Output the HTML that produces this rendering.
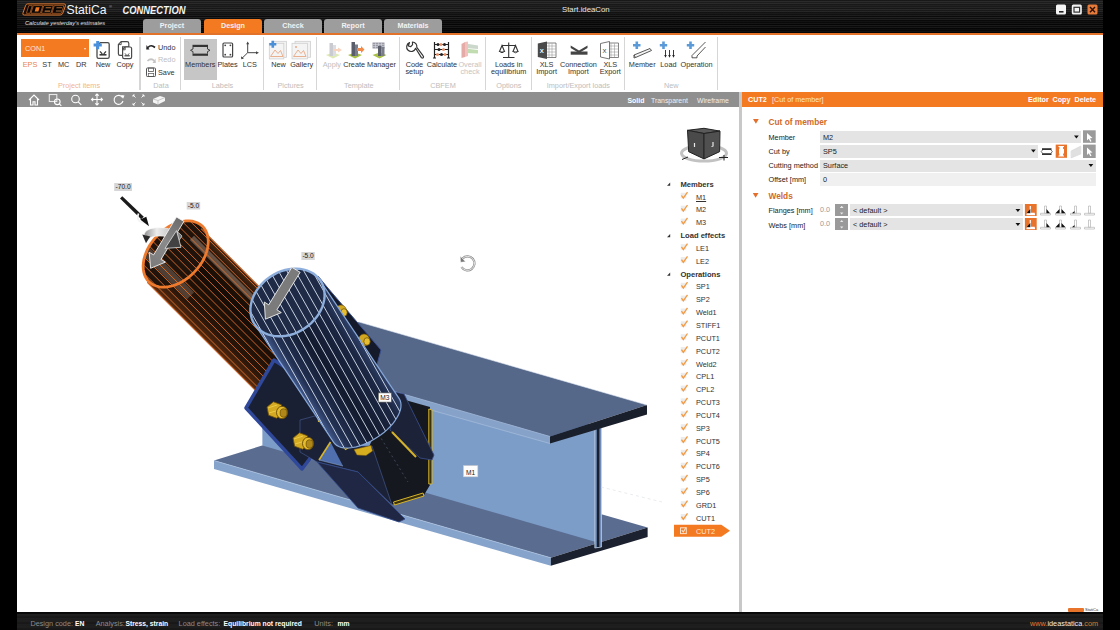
<!DOCTYPE html>
<html><head><meta charset="utf-8">
<style>
*{margin:0;padding:0;box-sizing:border-box}
html,body{width:1120px;height:630px;overflow:hidden;background:#000}
body{position:relative;font-family:"Liberation Sans",sans-serif;font-size:7.2px;color:#333}
.a{position:absolute;white-space:nowrap}
.c{text-align:center;line-height:8px}
.t{line-height:8px}
#title{left:17px;top:0;width:1086px;height:33px;background:linear-gradient(180deg,rgba(60,60,60,0.35) 0px,rgba(60,60,60,0.3) 9px,rgba(40,40,40,0.15) 16px,rgba(0,0,0,0.2) 24px,rgba(0,0,0,0.45) 33px),repeating-linear-gradient(180deg,#060606 0px,#060606 1px,#222 1.5px,#0c0c0c 2.5px,#0c0c0c 3px,#2a2a2a 3.7px,#080808 4.5px,#141414 5.5px,#0a0a0a 6.5px,#262626 7.2px,#070707 8px)}
#obar{left:17px;top:32.5px;width:1086px;height:2.5px;background:#e2722a}
#ribbon{left:17px;top:35px;width:1086px;height:57px;background:#fff}
.tab{top:19px;height:14px;width:58px;border-radius:3px 3px 0 0;background:#9d9d9d;color:#f2f2f2;font-weight:bold;text-align:center;line-height:14px;font-size:7.2px}
.sep{top:37px;width:1.3px;height:53px;background:#d6d6d6}
#vbar{left:17px;top:92px;width:722px;height:15px;background:#8f8f8f}
#split{left:739px;top:92px;width:3px;height:520px;background:#c8c8c8}
#view{left:17px;top:107px;width:722px;height:505px;background:#fff;overflow:hidden}
#panel{left:742px;top:107px;width:361px;height:505px;background:#fff}
#phead{left:742px;top:92px;width:361px;height:15px;background:#f47a22}
#status{left:17px;top:612px;width:1086px;height:18px;background:linear-gradient(180deg,#080808 0,#0a0a0a 1.5px,transparent 2px),repeating-linear-gradient(180deg,#161616 0px,#262626 1px,#141414 2px,#2a2a2a 3px,#121212 4px,#202020 5px,#101010 6px)}
svg.i{position:absolute;overflow:visible}
</style></head><body>
<div class="a" id="title"></div>
<div class="a" id="obar"></div>
<div class="a" id="ribbon"></div>
<div class="a" id="vbar"></div>
<div class="a" id="phead"></div>
<div class="a" id="view"></div>
<div class="a" id="split"></div>
<div class="a" id="panel"></div>
<div class="a" id="status"></div>

<svg class="i" style="left:0;top:0" width="200" height="32" viewBox="0 0 200 32">
<path d="M27.5,3.9 H64 Q66,3.9 65.4,5.8 L62.8,13.2 Q62.2,15 60.2,15 H24.2 Q22.3,15 22.9,13.2 L25.5,5.8 Q26,3.9 27.5,3.9 Z" fill="#1a0c04" stroke="#e07a30" stroke-width="1"/>
<g fill="#050505" stroke="#c86a2a" stroke-width="0.7">
<path d="M28.8,5.6 H32.3 L29.9,13.3 H26.4 Z"/>
<path d="M33.3,5.6 H42.8 L40.4,13.3 H30.9 Z"/>
<path d="M43.8,5.6 H53.3 L50.9,13.3 H41.4 Z"/>
<path d="M54.3,5.6 H63.8 L61.4,13.3 H51.9 Z"/>
</g>
<path d="M35.9,7.3 H39.6 L38.4,11.6 H34.7 Z" fill="#f07a22"/>
<path d="M45.8,7.2 H51.3 L51,8.3 H45.5 Z M44.8,10.6 H50.3 L50,11.7 H44.5 Z" fill="#b87038"/>
<path d="M56,10.5 H61.5 L61.2,11.6 H55.7 Z M56.6,7.2 H62.1 L61.8,8.3 H56.3 Z" fill="#a86a3a"/>
<text x="66.5" y="14.2" font-family="Liberation Sans" font-size="12.2" fill="#f4f4f4" font-weight="normal">StatiCa</text>
<text x="109" y="8" font-family="Liberation Sans" font-size="4" fill="#bbb">®</text>
<text x="122.5" y="13.8" font-family="Liberation Sans" font-size="10" font-style="italic" font-weight="bold" fill="#f4f4f4" textLength="63" lengthAdjust="spacingAndGlyphs">CONNECTION</text>
<text x="25" y="24.5" font-family="Liberation Sans" font-size="6.2" font-style="italic" fill="#e0e0e0" textLength="80" lengthAdjust="spacingAndGlyphs">Calculate yesterday's estimates</text>
</svg>
<div class="a" style="left:562px;top:5px;color:#e6e6e6;font-size:7.8px;line-height:10px">Start.ideaCon</div>
<svg class="i" style="left:1050px;top:0" width="60" height="20" viewBox="1050 0 60 20">
<rect x="1056" y="4.6" width="10" height="10" rx="1.5" fill="#f4f4f4"/><rect x="1059" y="11" width="4.5" height="1.6" fill="#222"/>
<rect x="1071.8" y="4.6" width="10" height="10" rx="1.5" fill="#f4f4f4"/><rect x="1074" y="7.3" width="5.6" height="4.8" fill="none" stroke="#333" stroke-width="1.2"/>
<rect x="1087.5" y="4.6" width="10" height="10" rx="1.5" fill="#e87a3a"/><path d="M1090,7 L1095,12.2 M1095,7 L1090,12.2" stroke="#2a1206" stroke-width="1.4"/>
</svg>
<div class="a tab" style="left:143px;">Project</div>
<div class="a tab" style="left:204px;background:#f47a22;">Design</div>
<div class="a tab" style="left:264px;">Check</div>
<div class="a tab" style="left:324px;">Report</div>
<div class="a tab" style="left:384px;">Materials</div>
<div class="a sep" style="left:139px;width:2px;"></div>
<div class="a sep" style="left:180px;"></div>
<div class="a sep" style="left:263px;"></div>
<div class="a sep" style="left:316px;"></div>
<div class="a sep" style="left:399px;"></div>
<div class="a sep" style="left:485px;"></div>
<div class="a sep" style="left:531px;"></div>
<div class="a sep" style="left:624px;"></div>
<div class="a sep" style="left:717px;"></div>
<div class="a c" style="left:39.0px;top:82.1px;width:80px;color:#f0b490;font-size:7.3px;">Project items</div>
<div class="a c" style="left:121.0px;top:82.1px;width:80px;color:#bdbdbd;font-size:7.3px;">Data</div>
<div class="a c" style="left:182.5px;top:82.1px;width:80px;color:#bdbdbd;font-size:7.3px;">Labels</div>
<div class="a c" style="left:250.6px;top:82.1px;width:80px;color:#bdbdbd;font-size:7.3px;">Pictures</div>
<div class="a c" style="left:318.8px;top:82.1px;width:80px;color:#bdbdbd;font-size:7.3px;">Template</div>
<div class="a c" style="left:403.0px;top:82.1px;width:80px;color:#bdbdbd;font-size:7.3px;">CBFEM</div>
<div class="a c" style="left:468.8px;top:82.1px;width:80px;color:#bdbdbd;font-size:7.3px;">Options</div>
<div class="a c" style="left:538.4px;top:82.1px;width:80px;color:#bdbdbd;font-size:7.3px;">Import/Export loads</div>
<div class="a c" style="left:631.3px;top:82.1px;width:80px;color:#bdbdbd;font-size:7.3px;">New</div>
<div class="a" style="left:21px;top:39px;width:68px;height:17.5px;background:#f47a22"></div>
<div class="a t" style="left:25.0px;top:45.3px;color:#fde6d4;font-size:7.3px;">CON1</div>
<div class="a" style="left:84px;top:47.5px;width:0;height:0;border-left:1.5px solid transparent;border-right:1.5px solid transparent;border-top:2px solid #fde6d4"></div>
<div class="a c" style="left:20.0px;top:61.2px;width:20px;color:#e8844a;font-size:7.3px;">EPS</div>
<div class="a c" style="left:37.0px;top:61.2px;width:20px;color:#333;font-size:7.3px;">ST</div>
<div class="a c" style="left:53.7px;top:61.2px;width:20px;color:#333;font-size:7.3px;">MC</div>
<div class="a c" style="left:71.2px;top:61.2px;width:20px;color:#333;font-size:7.3px;">DR</div>
<svg class="i" style="left:90px;top:38px" width="48" height="24" viewBox="90 38 48 24">
<path d="M100.2,42.7 H107.6 Q109.2,42.7 109.2,44.3 V56.7 Q109.2,58.3 107.6,58.3 H98.6 Q97,58.3 97,56.7 V45.9 Z" fill="#fff" stroke="#4a4a4a" stroke-width="1.3"/>
<path d="M99.5,54.8 H106.5" stroke="#3a3a3a" stroke-width="1.6"/><path d="M100,51.3 L102.3,54 M106,51.3 L103.7,54" stroke="#3a3a3a" stroke-width="1.2"/>
<path d="M97.7,41 V49.2 M93.6,45.1 H101.8" stroke="#4a90dc" stroke-width="3"/>
<path d="M121.2,41.6 H127 Q128.8,41.6 128.8,43.4 V46.8 H122.6 V55.3 H120 Q118.4,55.3 118.4,53.7 V44.4 Z" fill="#fff" stroke="#4a4a4a" stroke-width="1.2"/>
<path d="M118.6,44.6 H121.2 V41.8" fill="none" stroke="#4a4a4a" stroke-width="0.9"/>
<path d="M125.2,47 H130 Q131.6,47 131.6,48.6 V57 Q131.6,58.6 130,58.6 H124.2 Q122.6,58.6 122.6,57 V49.6 Z" fill="#fff" stroke="#4a4a4a" stroke-width="1.2"/>
<path d="M122.8,49.8 H125.2 V47.2" fill="none" stroke="#4a4a4a" stroke-width="0.9"/>
<path d="M124.5,55.8 H129.7" stroke="#3a3a3a" stroke-width="1.2"/><path d="M125,53.4 L126.5,55.2 M129.2,53.4 L127.7,55.2" stroke="#3a3a3a" stroke-width="0.9"/>
</svg>
<div class="a c" style="left:88.0px;top:61.2px;width:30px;color:#333;font-size:7.3px;">New</div>
<div class="a c" style="left:110.0px;top:61.2px;width:30px;color:#333;font-size:7.3px;">Copy</div>
<svg class="i" style="left:144px;top:40px" width="14" height="40" viewBox="144 40 14 40">
<path d="M148,47.5 Q151,44 155,47.5" fill="none" stroke="#222" stroke-width="1.7"/><path d="M146.5,45 L149.5,49.5 L146.2,49.5 Z" fill="#222"/>
<path d="M147.5,61 Q151,57.5 154.5,61" fill="none" stroke="#c4c4c4" stroke-width="1.7"/><path d="M155.5,58.5 L152.5,63 L155.8,63 Z" fill="#c4c4c4"/>
<rect x="146.5" y="68" width="9" height="8.5" rx="0.8" fill="#fff" stroke="#555" stroke-width="1"/><rect x="148.5" y="68" width="5" height="3.5" fill="none" stroke="#555" stroke-width="0.8"/><rect x="148.3" y="73.5" width="5.4" height="3" fill="none" stroke="#555" stroke-width="0.7"/>
</svg>
<div class="a t" style="left:158.0px;top:43.6px;color:#333;font-size:7.3px;">Undo</div>
<div class="a t" style="left:158.0px;top:56.4px;color:#c0c0c0;font-size:7.3px;">Redo</div>
<div class="a t" style="left:158.0px;top:69.2px;color:#333;font-size:7.3px;">Save</div>
<div class="a" style="left:184px;top:39.3px;width:32.5px;height:40.5px;background:#c6c6c6"></div>
<svg class="i" style="left:184px;top:38px" width="80" height="24" viewBox="184 38 80 24">
<rect x="192.5" y="44.8" width="15.5" height="2.2" fill="#333"/><rect x="192.5" y="53.6" width="15.5" height="2.2" fill="#333"/>
<path d="M193,47 L193,49 L190.5,50.3 L193,51.6 L193,53.6 M207.5,47 L207.5,49 L210,50.3 L207.5,51.6 L207.5,53.6" fill="none" stroke="#333" stroke-width="0.9"/>
<rect x="223" y="43" width="9.6" height="14" rx="1" fill="#fff" stroke="#444" stroke-width="1.2"/>
<circle cx="225.2" cy="45.3" r="0.9" fill="#444"/><circle cx="230.4" cy="45.3" r="0.9" fill="#444"/><circle cx="225.2" cy="54.7" r="0.9" fill="#444"/><circle cx="230.4" cy="54.7" r="0.9" fill="#444"/>
<path d="M247.7,52.7 L247.7,43.5 M247.7,52.7 L257,52.7 M247.7,52.7 L242,58.3" stroke="#444" stroke-width="1"/>
<path d="M246.2,44.3 L247.7,41.5 L249.2,44.3 Z M256,51.2 L259,52.7 L256,54.2 Z M241,56.3 L241.3,59.2 L243.9,58.4 Z" fill="#444"/>
</svg>
<div class="a c" style="left:160.3px;top:61.2px;width:80px;color:#333;font-size:7.3px;">Members</div>
<div class="a c" style="left:187.6px;top:61.2px;width:80px;color:#333;font-size:7.3px;">Plates</div>
<div class="a c" style="left:209.9px;top:61.2px;width:80px;color:#333;font-size:7.3px;">LCS</div>
<svg class="i" style="left:266px;top:38px" width="50" height="24" viewBox="266 38 50 24">
<rect x="272" y="41.3" width="14.5" height="16" fill="#f2f2f2" stroke="#cfcfcf" stroke-width="0.8"/>
<rect x="269.3" y="43.3" width="14.5" height="15.6" fill="#f4f4f4" stroke="#cfcfcf" stroke-width="0.8"/>
<path d="M270.5,56.5 L275,50 L278,53.5 L280.5,50.5 L283,56.5 M270.5,56.5 L283,56.5" fill="none" stroke="#e8a884" stroke-width="0.9"/>
<path d="M272.8,40.8 L272.8,47.8 M269.3,44.3 L276.3,44.3" stroke="#4a8fd8" stroke-width="2.6"/>
<rect x="295" y="41.3" width="15.5" height="16" fill="#f2f2f2" stroke="#cfcfcf" stroke-width="0.8"/>
<rect x="292" y="43.3" width="15.5" height="15.6" fill="#f4f4f4" stroke="#cfcfcf" stroke-width="0.8"/>
<path d="M293.5,56.5 L298,50 L301,53.5 L303.5,50.5 L306,56.5 M293.5,56.5 L306,56.5" fill="none" stroke="#e8a884" stroke-width="0.9"/>
<circle cx="296" cy="47" r="1" fill="#e8a884"/>
</svg>
<div class="a c" style="left:263.5px;top:61.2px;width:30px;color:#333;font-size:7.3px;">New</div>
<div class="a c" style="left:281.7px;top:61.2px;width:40px;color:#333;font-size:7.3px;">Gallery</div>
<svg class="i" style="left:318px;top:38px" width="80" height="24" viewBox="318 38 80 24">
<g opacity="0.45"><path d="M326,55 L333,52.5 L340,55 L333,58.5 Z" fill="#b8d060"/><rect x="329.5" y="43" width="3.5" height="13" fill="#8a8e9a"/><rect x="333" y="45" width="3" height="11" fill="#b0b4c0"/><path d="M334,50 L338,47.5 L338,49 L342,49 L342,51 L338,51 L338,52.5 Z" fill="#f0a070" transform="rotate(180 338 50)"/></g>
<path d="M348,55 L355,52.5 L362,55 L355,58.5 Z" fill="#a8c048"/><rect x="351.5" y="42" width="3.5" height="14" fill="#5a5e6a"/><rect x="355" y="44.5" width="3" height="11.5" fill="#7a7e8a"/><path d="M357,48 L361,48 L361,46 L364.5,49.5 L361,53 L361,51 L357,51 Z" fill="#f08a4a"/>
<path d="M372.5,55 L379.5,52.5 L386.5,55 L379.5,58.5 Z" fill="#a8c048"/><rect x="372.5" y="42.5" width="12" height="6" fill="#9a9aa6"/><path d="M372.5,44.5 H384.5 M372.5,46.5 H384.5 M375.5,42.5 V48.5 M378.5,42.5 V48.5 M381.5,42.5 V48.5" stroke="#e0e0e8" stroke-width="0.5"/><rect x="378" y="46" width="3.5" height="10" fill="#5a5e6a"/><rect x="381.5" y="47" width="3" height="9" fill="#7a7e8a"/>
</svg>
<div class="a c" style="left:316.9px;top:61.2px;width:30px;color:#c0c0c0;font-size:7.3px;">Apply</div>
<div class="a c" style="left:339.1px;top:61.2px;width:30px;color:#333;font-size:7.3px;">Create</div>
<div class="a c" style="left:361.5px;top:61.2px;width:40px;color:#333;font-size:7.3px;">Manager</div>
<svg class="i" style="left:402px;top:38px" width="120" height="24" viewBox="402 38 120 24">
<path d="M409.5,42.6 A4.6,4.6 0 1 0 415.6,48.3 L421.4,57.6 Q422.6,58.6 423.4,57.4 Q423.9,56.5 423,55.7 L416.8,47.4 A4.6,4.6 0 0 0 412.4,42 L412.6,44.6 L410.8,46.6 L408.3,46 Z" fill="#fff" stroke="#333" stroke-width="1.15" stroke-linejoin="round"/>
<path d="M434.5,42 V58 M448.5,42 V58 M434.5,44.5 H448.5 M434.5,49.5 H448.5 M434.5,54.5 H448.5 M433,58 H436 M447,58 H450" stroke="#222" stroke-width="1.2"/>
<circle cx="438" cy="44.5" r="1.5" fill="#222"/><circle cx="441" cy="44.5" r="1.5" fill="#e8926a"/><circle cx="444.5" cy="44.5" r="1.5" fill="#222"/>
<circle cx="439" cy="49.5" r="1.5" fill="#222"/><circle cx="443.5" cy="49.5" r="1.5" fill="#e8926a"/>
<circle cx="437.5" cy="54.5" r="1.5" fill="#e8926a"/><circle cx="441.5" cy="54.5" r="1.5" fill="#222"/><circle cx="445" cy="54.5" r="1.5" fill="#e8926a"/>
<g opacity="0.55"><path d="M461.5,44 L465,42 L465,57 L461.5,58 Z" fill="#d06a60"/><path d="M465,43.5 L478,45.5 L478,49 L465,48 Z" fill="#a0b8a0"/><path d="M465,48.5 L478,50 L478,53.5 L465,53 Z" fill="#90c070"/><path d="M465,42 L468,41.5 L468,56 L465,57 Z" fill="#e89088"/></g>
<path d="M508.7,42.5 V57 M503,57.5 H514.5 M502,45.5 H515.5 M502,45.5 L499.5,51.5 H504.5 Z M515.5,45.5 L513,51.5 H518 Z" fill="none" stroke="#333" stroke-width="1.1"/>
<path d="M499.5,51.5 Q502,54 504.5,51.5 M513,51.5 Q515.5,54 518,51.5" fill="#fff" stroke="#333" stroke-width="1"/>
</svg>
<div class="a c" style="left:399.4px;top:61.2px;width:30px;color:#333;font-size:7.3px;">Code</div>
<div class="a c" style="left:399.4px;top:68.2px;width:30px;color:#333;font-size:7.3px;">setup</div>
<div class="a c" style="left:421.9px;top:61.2px;width:40px;color:#333;font-size:7.3px;">Calculate</div>
<div class="a c" style="left:455.0px;top:61.2px;width:30px;color:#c4c4c4;font-size:7.3px;">Overall</div>
<div class="a c" style="left:455.0px;top:68.2px;width:30px;color:#c4c4c4;font-size:7.3px;">check</div>
<div class="a c" style="left:488.7px;top:61.2px;width:40px;color:#333;font-size:7.3px;">Loads in</div>
<div class="a c" style="left:483.7px;top:68.2px;width:50px;color:#333;font-size:7.3px;">equilibrium</div>
<svg class="i" style="left:534px;top:38px" width="180" height="24" viewBox="534 38 180 24">
<path d="M544,43 H556 V57.5 H544 Z" fill="#fff" stroke="#666" stroke-width="0.8"/><path d="M546,46 H555.5 M546,49 H555.5 M546,52 H555.5 M546,55 H555.5 M549,43.5 V57 M552,43.5 V57" stroke="#888" stroke-width="0.5"/>
<path d="M537.8,43.5 L547,41.5 V59 L537.8,57 Z" fill="#4a4a4a"/><text x="539.8" y="53.2" font-family="Liberation Sans" font-size="6" fill="#fff" font-weight="bold">X</text>
<path d="M570.7,45.5 L579,50.5 L587.5,45.5 V48 L579,53 L570.7,48 Z" fill="#444"/><rect x="570.7" y="51.5" width="16.8" height="3.2" fill="#444"/>
<path d="M606,43 H618.5 V57.5 H606 Z" fill="#fff" stroke="#666" stroke-width="0.8"/><path d="M608,46 H618 M608,49 H618 M608,52 H618 M608,55 H618 M611,43.5 V57 M614.5,43.5 V57" stroke="#888" stroke-width="0.5"/>
<path d="M600.5,43.5 L609.5,41.5 V59 L600.5,57 Z" fill="#fff" stroke="#555" stroke-width="0.8"/><text x="602.5" y="53.2" font-family="Liberation Sans" font-size="6" fill="#333">X</text>
<path d="M636.8,41.5 V49 M633,45.2 H640.5" stroke="#5a9ad8" stroke-width="2.6"/>
<path d="M634,55 L650,48.5 L651.5,50.5 L635.5,57.5 Z" fill="#f4f4f4" stroke="#444" stroke-width="0.9"/><path d="M634,55 L634,58 L635.5,57.5" fill="none" stroke="#444" stroke-width="0.9"/>
<path d="M663.5,41.5 V49 M659.8,45.2 H667.2" stroke="#5a9ad8" stroke-width="2.6"/>
<path d="M665.5,50 V56 M669.5,50 V56 M673.5,50 V56" stroke="#222" stroke-width="0.9"/><path d="M664.2,55 L665.5,57.8 L666.8,55 Z M668.2,55 L669.5,57.8 L670.8,55 Z M672.2,55 L673.5,57.8 L674.8,55 Z" fill="#222"/>
<path d="M690.5,41.5 V49 M686.8,45.2 H694.2" stroke="#5a9ad8" stroke-width="2.6"/>
<path d="M705.5,42 L692,55.5 M705.5,47 L697,56 M692,55.5 V57.8 H697 V56" fill="none" stroke="#444" stroke-width="0.9"/>
</svg>
<div class="a c" style="left:531.6px;top:61.2px;width:30px;color:#333;font-size:7.3px;">XLS</div>
<div class="a c" style="left:531.6px;top:68.2px;width:30px;color:#333;font-size:7.3px;">Import</div>
<div class="a c" style="left:553.4px;top:61.2px;width:50px;color:#333;font-size:7.3px;">Connection</div>
<div class="a c" style="left:563.4px;top:68.2px;width:30px;color:#333;font-size:7.3px;">Import</div>
<div class="a c" style="left:595.3px;top:61.2px;width:30px;color:#333;font-size:7.3px;">XLS</div>
<div class="a c" style="left:595.3px;top:68.2px;width:30px;color:#333;font-size:7.3px;">Export</div>
<div class="a c" style="left:622.2px;top:61.2px;width:40px;color:#333;font-size:7.3px;">Member</div>
<div class="a c" style="left:653.4px;top:61.2px;width:30px;color:#333;font-size:7.3px;">Load</div>
<div class="a c" style="left:676.6px;top:61.2px;width:40px;color:#333;font-size:7.3px;">Operation</div>
<svg class="i" style="left:20px;top:92px" width="160" height="15" viewBox="20 92 160 15">
<g fill="none" stroke="#fff" stroke-width="1.1">
<path d="M29,100 L34,95 L39,100 M30.5,98.8 V105 H33 V101.8 H35 V105 H37.5 V98.8"/>
<rect x="49.3" y="94.5" width="7.5" height="7" stroke="#e8e8e8"/><circle cx="57.3" cy="101.8" r="2.8"/><path d="M59.3,103.8 L61.3,105.8"/>
<circle cx="75.5" cy="99" r="3.8"/><path d="M78.2,101.8 L81.3,104.9"/>
<path d="M97,94 V105 M91.5,99.5 H102.5 M95.3,95.7 L97,94 L98.7,95.7 M95.3,103.3 L97,105 L98.7,103.3 M93.2,97.8 L91.5,99.5 L93.2,101.2 M100.8,97.8 L102.5,99.5 L100.8,101.2"/>
<path d="M122.5,97.5 A4.5,4.5 0 1 0 123,101"/>
</g>
<path d="M121,95 L124.5,95.5 L123,98.8 Z" fill="#fff"/>
<g stroke="#fff" stroke-width="0.9" fill="none"><path d="M133,95 L135.5,97.5 M133,95 V96.8 M133,95 H134.8 M144,95 L141.5,97.5 M144,95 V96.8 M144,95 H142.2 M133,105 L135.5,102.5 M133,105 V103.2 M133,105 H134.8 M144,105 L141.5,102.5 M144,105 V103.2 M144,105 H142.2"/></g>
<path d="M153,99 L160,96 L165,97.5 L165,101 L158,104.5 L153,102.5 Z" fill="#f4f4f4"/><path d="M153,99 L158,100.5 L165,97.5 M158,100.5 V104.5" stroke="#aaa" stroke-width="0.6" fill="none"/>
</svg>
<div class="a t" style="left:627.5px;top:96.6px;color:#fff;font-size:6.9px;font-weight:bold;">Solid</div>
<div class="a t" style="left:651.0px;top:96.6px;color:#f0f0f0;font-size:6.9px;">Transparent</div>
<div class="a t" style="left:697.0px;top:96.6px;color:#f0f0f0;font-size:6.9px;">Wireframe</div>
<svg class="a" id="view3d" style="left:17px;top:107px" width="722" height="505" viewBox="17 107 722 505">
<polygon points="214.0,460.6 550.8,557.8 647.6,527.6 310.8,430.4" fill="#5a6d90"/>
<polygon points="214.0,460.6 550.8,557.8 550.8,565.7 214.0,469.0" fill="#86a3cb"/>
<polygon points="550.8,557.8 647.6,527.6 647.6,537.0 550.8,565.7" fill="#1c2130"/>
<line x1="214" y1="460.6" x2="550.8" y2="557.8" stroke="#a9c0de" stroke-width="0.8"/>
<polygon points="262.0,330.0 598.5,427.0 598.5,542.7 262.4,445.5" fill="#7d9dc9"/>
<polygon points="594.8,423.5 601.5,422.5 601.5,547.0 594.8,548.0" fill="#6f8db8" stroke="#c8d6ea" stroke-width="0.7"/>
<rect x="596.8" y="424" width="2.6" height="123" fill="#1a2030"/>
<polygon points="262.0,353.3 550.0,436.5 647.0,405.0 359.0,322.0" fill="#56688a"/>
<polygon points="262.0,353.3 550.0,436.5 550.0,443.5 262.0,362.5" fill="#86a2c8"/>
<line x1="262" y1="362.5" x2="550" y2="443.5" stroke="#a8bedc" stroke-width="0.7"/>
<polygon points="550.0,436.5 647.0,405.0 647.0,414.5 550.0,443.5" fill="#1a1f2c"/>
<line x1="262" y1="353.3" x2="550" y2="436.5" stroke="#9fb5d6" stroke-width="0.8"/>
<line x1="359" y1="322" x2="647" y2="405" stroke="#dfe6f0" stroke-width="0.6"/>
<line x1="601" y1="487" x2="662" y2="502" stroke="#d8dde6" stroke-width="0.6" stroke-dasharray="3,3"/>
<clipPath id="cM2"><polygon points="147.3,282.4 288.8,423.8 342.5,370.1 201.1,228.6"/><polygon points="149.1,281.9 147.3,279.8 145.8,277.5 144.6,275.0 143.8,272.2 143.3,269.2 143.1,266.0 143.4,262.7 143.9,259.3 144.9,255.9 146.1,252.4 147.7,248.9 149.6,245.6 151.8,242.2 154.2,239.1 156.9,236.1 159.8,233.2 162.8,230.7 166.0,228.3 169.3,226.3 172.7,224.5 176.1,223.1 179.5,222.0 182.8,221.3 186.1,220.9 189.3,220.9 192.3,221.2 195.1,222.0 197.8,223.0 200.1,224.4 202.3,226.1 204.1,228.2 205.6,230.5 206.8,233.0 207.6,235.8 208.1,238.8 208.3,242.0 208.0,245.3 207.5,248.7 206.5,252.1 205.3,255.6 203.7,259.1 201.8,262.4 199.6,265.8 197.2,268.9 194.5,271.9 191.6,274.8 188.6,277.3 185.4,279.7 182.1,281.7 178.7,283.5 175.3,284.9 171.9,286.0 168.6,286.7 165.3,287.1 162.1,287.1 159.1,286.8 156.3,286.0 153.6,285.0 151.3,283.6 149.1,281.9"/></clipPath>
<linearGradient id="gM2" gradientUnits="userSpaceOnUse" x1="147.3" y1="282.4" x2="201.1" y2="228.6"><stop offset="0" stop-color="#5a2c10"/><stop offset="0.18" stop-color="#2a160a"/><stop offset="0.6" stop-color="#150c06"/><stop offset="0.85" stop-color="#241408"/><stop offset="1" stop-color="#4a2812"/></linearGradient>
<polygon points="147.3,282.4 288.8,423.8 342.5,370.1 201.1,228.6" fill="url(#gM2)"/>
<polygon points="149.1,281.9 147.3,279.8 145.8,277.5 144.6,275.0 143.8,272.2 143.3,269.2 143.1,266.0 143.4,262.7 143.9,259.3 144.9,255.9 146.1,252.4 147.7,248.9 149.6,245.6 151.8,242.2 154.2,239.1 156.9,236.1 159.8,233.2 162.8,230.7 166.0,228.3 169.3,226.3 172.7,224.5 176.1,223.1 179.5,222.0 182.8,221.3 186.1,220.9 189.3,220.9 192.3,221.2 195.1,222.0 197.8,223.0 200.1,224.4 202.3,226.1 204.1,228.2 205.6,230.5 206.8,233.0 207.6,235.8 208.1,238.8 208.3,242.0 208.0,245.3 207.5,248.7 206.5,252.1 205.3,255.6 203.7,259.1 201.8,262.4 199.6,265.8 197.2,268.9 194.5,271.9 191.6,274.8 188.6,277.3 185.4,279.7 182.1,281.7 178.7,283.5 175.3,284.9 171.9,286.0 168.6,286.7 165.3,287.1 162.1,287.1 159.1,286.8 156.3,286.0 153.6,285.0 151.3,283.6 149.1,281.9" fill="#1f130b"/>
<g clip-path="url(#cM2)">
<polygon points="194.0,235.7 335.4,377.1 331.2,381.4 189.8,239.9" fill="#9a8474" opacity="0.55"/>
<polygon points="144.6,242.7 194.1,292.2 187.0,299.3 137.5,249.8" fill="#8a7466" opacity="0.45"/>
<line x1="156.9" y1="188.0" x2="340.7" y2="371.8" stroke="#e0702c" stroke-width="0.9"/>
<line x1="152.8" y1="192.1" x2="336.6" y2="375.9" stroke="#e0702c" stroke-width="0.9"/>
<line x1="148.7" y1="196.2" x2="332.5" y2="380.0" stroke="#e0702c" stroke-width="0.9"/>
<line x1="144.6" y1="200.3" x2="328.4" y2="384.1" stroke="#e0702c" stroke-width="0.9"/>
<line x1="140.5" y1="204.4" x2="324.3" y2="388.2" stroke="#e0702c" stroke-width="0.9"/>
<line x1="136.4" y1="208.5" x2="320.2" y2="392.3" stroke="#e0702c" stroke-width="0.9"/>
<line x1="132.3" y1="212.6" x2="316.1" y2="396.4" stroke="#e0702c" stroke-width="0.9"/>
<line x1="128.2" y1="216.7" x2="312.0" y2="400.5" stroke="#e0702c" stroke-width="0.9"/>
<line x1="124.1" y1="220.8" x2="307.9" y2="404.6" stroke="#e0702c" stroke-width="0.9"/>
<line x1="120.0" y1="224.9" x2="303.8" y2="408.7" stroke="#e0702c" stroke-width="0.9"/>
<line x1="115.9" y1="229.0" x2="299.7" y2="412.8" stroke="#e0702c" stroke-width="0.9"/>
<line x1="111.8" y1="233.1" x2="295.6" y2="416.9" stroke="#e0702c" stroke-width="0.9"/>
<line x1="107.7" y1="237.2" x2="291.5" y2="421.0" stroke="#e0702c" stroke-width="0.9"/>
</g>
<polyline points="147.3,282.4 288.8,423.8" fill="none" stroke="#c8642a" stroke-width="1.2"/>
<polyline points="342.5,370.1 201.1,228.6" fill="none" stroke="#c8642a" stroke-width="1.2"/>
<polygon points="149.1,281.9 147.3,279.8 145.8,277.5 144.6,275.0 143.8,272.2 143.3,269.2 143.1,266.0 143.4,262.7 143.9,259.3 144.9,255.9 146.1,252.4 147.7,248.9 149.6,245.6 151.8,242.2 154.2,239.1 156.9,236.1 159.8,233.2 162.8,230.7 166.0,228.3 169.3,226.3 172.7,224.5 176.1,223.1 179.5,222.0 182.8,221.3 186.1,220.9 189.3,220.9 192.3,221.2 195.1,222.0 197.8,223.0 200.1,224.4 202.3,226.1 204.1,228.2 205.6,230.5 206.8,233.0 207.6,235.8 208.1,238.8 208.3,242.0 208.0,245.3 207.5,248.7 206.5,252.1 205.3,255.6 203.7,259.1 201.8,262.4 199.6,265.8 197.2,268.9 194.5,271.9 191.6,274.8 188.6,277.3 185.4,279.7 182.1,281.7 178.7,283.5 175.3,284.9 171.9,286.0 168.6,286.7 165.3,287.1 162.1,287.1 159.1,286.8 156.3,286.0 153.6,285.0 151.3,283.6 149.1,281.9" fill="none" stroke="#ee7a2e" stroke-width="2.8"/>
<polygon points="318.0,276.0 327.0,287.0 381.0,350.0 376.0,368.0 330.0,330.0" fill="#141a2a" stroke="#3a4f90" stroke-width="1"/>
<ellipse cx="341" cy="311" rx="5.5" ry="6" fill="#d2a820" stroke="#7a5a0a" stroke-width="0.6"/>
<ellipse cx="344" cy="312.5" rx="3.2" ry="3.8" fill="#e6be30" stroke="#6a4c08" stroke-width="0.7"/>
<ellipse cx="364" cy="340" rx="5.5" ry="6" fill="#d2a820" stroke="#7a5a0a" stroke-width="0.6"/>
<ellipse cx="367" cy="341.5" rx="3.2" ry="3.8" fill="#e6be30" stroke="#6a4c08" stroke-width="0.7"/>
<polygon points="274.0,360.0 246.0,408.0 302.0,469.0 350.0,410.0" fill="#1a2033"/>
<polyline points="350.0,410.0 274.0,360.0 246.0,408.0 302.0,469.0 330.0,432.0" fill="none" stroke="#30489a" stroke-width="3.5" stroke-linejoin="round"/>
<polygon points="398.0,398.0 430.0,407.0 430.0,485.0 424.0,495.0 392.5,504.6 357.6,472.4 372.0,440.0" fill="#15181f"/>
<polygon points="428.8,409 432,410 432,484 428.8,484" fill="#3a3210" stroke="#d8b52a" stroke-width="1"/>
<polygon points="393.5,502 423,493 424,496 394.5,505" fill="#3a3210" stroke="#d8b52a" stroke-width="1"/>
<line x1="376" y1="430" x2="408" y2="482" stroke="#6a7390" stroke-width="0.5" stroke-dasharray="2,3"/>
<polygon points="300.0,420.0 322.0,414.0 352.0,446.0 372.0,446.0 392.0,505.0 358.0,472.0 317.0,462.0 300.0,452.0" fill="#1b2238" stroke="#4a5f98" stroke-width="0.6"/>
<polygon points="319.0,460.0 330.5,442.0 343.0,466.0" fill="#4f6fae"/>
<line x1="319" y1="460" x2="330.5" y2="442" stroke="#d8b52a" stroke-width="1.6"/>
<line x1="319" y1="460" x2="343" y2="466" stroke="#8aa0c8" stroke-width="0.6"/>
<polygon points="323.5,420.5 327.5,418.5 349.5,447.0 345.5,449.5" fill="#15192a" stroke="#d8b52a" stroke-width="1.2"/>
<polygon points="317.5,417 322.5,416 323,421.5 318,422" fill="#d8b52a"/>
<polygon points="317.0,462.0 358.0,472.0 405.0,519.0 399.0,522.0 358.0,508.0" fill="#1f2744" stroke="#344a8a" stroke-width="0.8"/>
<polygon points="395.0,392.0 404.0,394.0 434.0,455.0 432.0,460.0 420.0,458.0 390.0,430.0" fill="#1c2238" stroke="#3a4f90" stroke-width="0.8"/>
<polyline points="392,432 416,457" fill="none" stroke="#d5b22a" stroke-width="2"/>
<clipPath id="cM3"><polygon points="320.2,280.6 399.2,398.6 400.2,400.5 400.8,402.5 401.0,404.8 400.9,407.3 400.4,409.9 399.5,412.6 398.2,415.4 396.6,418.2 394.7,421.1 392.5,424.0 389.9,426.8 387.2,429.6 384.2,432.2 380.9,434.8 377.6,437.1 374.1,439.3 370.5,441.3 366.9,443.1 363.3,444.6 359.7,445.9 356.2,446.8 352.8,447.5 349.6,447.9 346.5,448.0 343.7,447.8 341.1,447.3 338.8,446.5 336.7,445.4 335.1,444.0 333.7,442.4 254.8,324.4"/><polygon points="254.7,324.5 253.0,321.7 251.8,318.6 251.0,315.4 250.5,312.1 250.4,308.6 250.8,305.1 251.6,301.6 252.7,298.1 254.3,294.6 256.2,291.2 258.4,287.9 261.0,284.8 263.8,281.9 266.9,279.2 270.3,276.7 273.8,274.6 277.5,272.7 281.2,271.2 285.1,270.0 289.0,269.2 292.9,268.7 296.7,268.7 300.4,268.9 303.9,269.6 307.3,270.6 310.5,272.0 313.4,273.6 316.0,275.7 318.3,278.0 320.3,280.5 322.0,283.3 323.2,286.4 324.0,289.6 324.5,292.9 324.6,296.4 324.2,299.9 323.4,303.4 322.3,306.9 320.7,310.4 318.8,313.8 316.6,317.1 314.0,320.2 311.2,323.1 308.1,325.8 304.7,328.3 301.2,330.4 297.5,332.3 293.8,333.8 289.9,335.0 286.0,335.8 282.1,336.3 278.3,336.3 274.6,336.1 271.1,335.4 267.7,334.4 264.5,333.0 261.6,331.4 259.0,329.3 256.7,327.0 254.7,324.5"/></clipPath>
<linearGradient id="gM3" gradientUnits="userSpaceOnUse" x1="254.8" y1="324.4" x2="320.2" y2="280.6"><stop offset="0" stop-color="#41588a"/><stop offset="0.12" stop-color="#223052"/><stop offset="0.45" stop-color="#121a2e"/><stop offset="0.85" stop-color="#1c2744"/><stop offset="1" stop-color="#2e4068"/></linearGradient>
<polygon points="320.2,280.6 399.2,398.6 400.2,400.5 400.8,402.5 401.0,404.8 400.9,407.3 400.4,409.9 399.5,412.6 398.2,415.4 396.6,418.2 394.7,421.1 392.5,424.0 389.9,426.8 387.2,429.6 384.2,432.2 380.9,434.8 377.6,437.1 374.1,439.3 370.5,441.3 366.9,443.1 363.3,444.6 359.7,445.9 356.2,446.8 352.8,447.5 349.6,447.9 346.5,448.0 343.7,447.8 341.1,447.3 338.8,446.5 336.7,445.4 335.1,444.0 333.7,442.4 254.8,324.4" fill="url(#gM3)"/>
<polygon points="254.7,324.5 253.0,321.7 251.8,318.6 251.0,315.4 250.5,312.1 250.4,308.6 250.8,305.1 251.6,301.6 252.7,298.1 254.3,294.6 256.2,291.2 258.4,287.9 261.0,284.8 263.8,281.9 266.9,279.2 270.3,276.7 273.8,274.6 277.5,272.7 281.2,271.2 285.1,270.0 289.0,269.2 292.9,268.7 296.7,268.7 300.4,268.9 303.9,269.6 307.3,270.6 310.5,272.0 313.4,273.6 316.0,275.7 318.3,278.0 320.3,280.5 322.0,283.3 323.2,286.4 324.0,289.6 324.5,292.9 324.6,296.4 324.2,299.9 323.4,303.4 322.3,306.9 320.7,310.4 318.8,313.8 316.6,317.1 314.0,320.2 311.2,323.1 308.1,325.8 304.7,328.3 301.2,330.4 297.5,332.3 293.8,333.8 289.9,335.0 286.0,335.8 282.1,336.3 278.3,336.3 274.6,336.1 271.1,335.4 267.7,334.4 264.5,333.0 261.6,331.4 259.0,329.3 256.7,327.0 254.7,324.5" fill="#1e2a46"/>
<g clip-path="url(#cM3)">
<line x1="307.4" y1="217.2" x2="444.8" y2="461.2" stroke="#dbe4f2" stroke-width="0.9"/>
<line x1="301.3" y1="221.3" x2="438.7" y2="465.3" stroke="#dbe4f2" stroke-width="0.9"/>
<line x1="295.1" y1="225.4" x2="432.5" y2="469.4" stroke="#dbe4f2" stroke-width="0.9"/>
<line x1="289.0" y1="229.5" x2="426.4" y2="473.5" stroke="#dbe4f2" stroke-width="0.9"/>
<line x1="282.8" y1="233.7" x2="420.2" y2="477.6" stroke="#dbe4f2" stroke-width="0.9"/>
<line x1="276.7" y1="237.8" x2="414.1" y2="481.7" stroke="#dbe4f2" stroke-width="0.9"/>
<line x1="270.5" y1="241.9" x2="407.9" y2="485.8" stroke="#dbe4f2" stroke-width="0.9"/>
<line x1="264.4" y1="246.0" x2="401.8" y2="490.0" stroke="#dbe4f2" stroke-width="0.9"/>
<line x1="258.2" y1="250.1" x2="395.6" y2="494.1" stroke="#dbe4f2" stroke-width="0.9"/>
<line x1="252.1" y1="254.2" x2="389.5" y2="498.2" stroke="#dbe4f2" stroke-width="0.9"/>
<line x1="245.9" y1="258.3" x2="383.3" y2="502.3" stroke="#dbe4f2" stroke-width="0.9"/>
<line x1="239.8" y1="262.5" x2="377.2" y2="506.4" stroke="#dbe4f2" stroke-width="0.9"/>
<line x1="233.6" y1="266.6" x2="371.0" y2="510.5" stroke="#dbe4f2" stroke-width="0.9"/>
<line x1="227.5" y1="270.7" x2="364.9" y2="514.7" stroke="#dbe4f2" stroke-width="0.9"/>
<line x1="221.3" y1="274.8" x2="358.7" y2="518.8" stroke="#dbe4f2" stroke-width="0.9"/>
<line x1="215.2" y1="278.9" x2="352.6" y2="522.9" stroke="#dbe4f2" stroke-width="0.9"/>
<line x1="209.0" y1="283.0" x2="346.4" y2="527.0" stroke="#dbe4f2" stroke-width="0.9"/>
</g>
<polyline points="320.2,280.6 399.2,398.6 400.2,400.5 400.8,402.5 401.0,404.8 400.9,407.3 400.4,409.9 399.5,412.6 398.2,415.4 396.6,418.2 394.7,421.1 392.5,424.0 389.9,426.8 387.2,429.6 384.2,432.2 380.9,434.8 377.6,437.1 374.1,439.3 370.5,441.3 366.9,443.1 363.3,444.6 359.7,445.9 356.2,446.8 352.8,447.5 349.6,447.9 346.5,448.0 343.7,447.8 341.1,447.3 338.8,446.5 336.7,445.4 335.1,444.0 333.7,442.4 254.8,324.4" fill="none" stroke="#86a6d6" stroke-width="1.2"/>
<polygon points="254.7,324.5 253.0,321.7 251.8,318.6 251.0,315.4 250.5,312.1 250.4,308.6 250.8,305.1 251.6,301.6 252.7,298.1 254.3,294.6 256.2,291.2 258.4,287.9 261.0,284.8 263.8,281.9 266.9,279.2 270.3,276.7 273.8,274.6 277.5,272.7 281.2,271.2 285.1,270.0 289.0,269.2 292.9,268.7 296.7,268.7 300.4,268.9 303.9,269.6 307.3,270.6 310.5,272.0 313.4,273.6 316.0,275.7 318.3,278.0 320.3,280.5 322.0,283.3 323.2,286.4 324.0,289.6 324.5,292.9 324.6,296.4 324.2,299.9 323.4,303.4 322.3,306.9 320.7,310.4 318.8,313.8 316.6,317.1 314.0,320.2 311.2,323.1 308.1,325.8 304.7,328.3 301.2,330.4 297.5,332.3 293.8,333.8 289.9,335.0 286.0,335.8 282.1,336.3 278.3,336.3 274.6,336.1 271.1,335.4 267.7,334.4 264.5,333.0 261.6,331.4 259.0,329.3 256.7,327.0 254.7,324.5" fill="none" stroke="#8eaedb" stroke-width="2.4"/>
<polygon points="283.0,412.9 276.6,418.2 268.6,415.3 267.0,407.1 273.4,401.8 281.4,404.7 283.0,412.9" fill="#d4aa22" stroke="#6a4c08" stroke-width="0.8" stroke-linejoin="round"/>
<path d="M268,408 L277,405 M269,413 L279,410" stroke="#f0d050" stroke-width="0.8"/>
<ellipse cx="282" cy="412.5" rx="5.5" ry="6.2" fill="#e4bc2c" stroke="#6a4c08" stroke-width="0.9"/>
<ellipse cx="283.5" cy="413" rx="3.4" ry="4.2" fill="#b08818" stroke="#5a4006" stroke-width="0.6"/>
<polygon points="309.0,443.9 302.6,449.2 294.6,446.3 293.0,438.1 299.4,432.8 307.4,435.7 309.0,443.9" fill="#d4aa22" stroke="#6a4c08" stroke-width="0.8" stroke-linejoin="round"/>
<path d="M294,439 L303,436 M295,444 L305,441" stroke="#f0d050" stroke-width="0.8"/>
<ellipse cx="308" cy="443.5" rx="5.5" ry="6.2" fill="#e4bc2c" stroke="#6a4c08" stroke-width="0.9"/>
<ellipse cx="309.5" cy="444" rx="3.4" ry="4.2" fill="#b08818" stroke="#5a4006" stroke-width="0.6"/>
<polygon points="354,449.5 371,445.5 372.5,451 366,455.5 357,455" fill="#d6ad1e" stroke="#7a5a0a" stroke-width="0.5"/>
<path d="M120,198.5 L122.3,196.2 L143.8,216.8 L141.2,219.3 Z" fill="#1a1a1a"/>
<path d="M138.5,213.5 Q136.5,219 140,221.5 Q143.5,223.5 147.5,222" fill="none" stroke="#f4f4f4" stroke-width="1.8"/>
<path d="M140.2,219.6 L146.3,216.8 L149,226.2 Z" fill="#111"/>
<linearGradient id="gMom" gradientUnits="userSpaceOnUse" x1="143" y1="0" x2="182" y2="0"><stop offset="0" stop-color="#8a8a8a"/><stop offset="0.35" stop-color="#ececec"/><stop offset="0.7" stop-color="#c8c8c8"/><stop offset="1" stop-color="#6a6a6a"/></linearGradient>
<path d="M144,234.5 C146,228 156,226.5 168,228.5 C174,229.5 179,232 182,236 L178,242 C174,238.5 170,237 166,236.5 C158,235.5 151,236 149,239 Z" fill="url(#gMom)" stroke="#fafafa" stroke-width="0.6"/>
<path d="M142.3,234.5 L150.2,236.5 L146,243.3 Z" fill="#2a2a2a"/>
<linearGradient id="gArr" gradientUnits="userSpaceOnUse" x1="184" y1="219" x2="150" y2="268"><stop offset="0" stop-color="#6a6a6a"/><stop offset="0.5" stop-color="#8a8a8a"/><stop offset="1" stop-color="#7a7a7a"/></linearGradient>
<polygon points="183.9,221.4 161.0,259.4 165.4,262.1 150.6,268.3 149.2,252.3 153.6,254.9 176.5,217.0" fill="url(#gArr)" stroke="#f2f2f2" stroke-width="0.9" stroke-linejoin="miter"/>
<path d="M176.5,230.6 L181,247.3 L165,248.4 Z" fill="#424242" stroke="#e0e0e0" stroke-width="0.8"/>
<polygon points="300.1,272.3 276.9,309.8 281.3,312.6 265.4,319.2 264.3,302.0 268.7,304.8 291.9,267.3" fill="#7b7b7b" stroke="#f0f0f0" stroke-width="0.9" stroke-linejoin="miter"/>
<rect x="114.2" y="183" width="17.799999999999997" height="8" fill="#d6d6d6" stroke="none" stroke-width="0.6"/>
<text x="123.1" y="189.2" text-anchor="middle" font-family="Liberation Sans" font-size="6.6" fill="#1a1a1a">-70.0</text>
<rect x="186.7" y="202" width="13.5" height="7.5" fill="#d6d6d6" stroke="none" stroke-width="0.6"/>
<text x="193.4" y="207.7" text-anchor="middle" font-family="Liberation Sans" font-size="6.6" fill="#1a1a1a">-5.0</text>
<rect x="301.4" y="252" width="13.400000000000034" height="8" fill="#d6d6d6" stroke="none" stroke-width="0.6"/>
<text x="308.1" y="258.2" text-anchor="middle" font-family="Liberation Sans" font-size="6.6" fill="#1a1a1a">-5.0</text>
<rect x="378.3" y="392.9" width="13.099999999999966" height="9.200000000000045" fill="#fdfdfd" stroke="#555" stroke-width="0.6"/>
<text x="384.9" y="400.3" text-anchor="middle" font-family="Liberation Sans" font-size="6.6" fill="#1a1a1a">M3</text>
<rect x="463.5" y="465.7" width="14.300000000000011" height="11.100000000000023" fill="#fdfdfd" stroke="#ccc" stroke-width="0.6"/>
<text x="470.6" y="475.0" text-anchor="middle" font-family="Liberation Sans" font-size="6.6" fill="#1a1a1a">M1</text>
<path d="M462.5,258.5 A7,7 0 1 1 461.5,267" fill="none" stroke="#8a8a8a" stroke-width="2.2"/><path d="M462.5,258.5 A7,7 0 1 1 461.5,267" fill="none" stroke="#fff" stroke-width="0.8"/>
<path d="M460.2,256 L460.5,262.3 L465.5,261.8 Z" fill="#777" stroke="#fff" stroke-width="0.5"/>
<ellipse cx="704" cy="153.3" rx="22.5" ry="7.8" fill="none" stroke="#c2c2c2" stroke-width="3"/>
<path d="M687.5,130.3 L704,128.3 L720,131.1 L704,133.5 Z" fill="#5a5a5a" stroke="#222" stroke-width="1"/>
<path d="M687.5,130.3 L704,133.5 L704,158.9 L688.7,151.7 Z" fill="#4a4a4a" stroke="#222" stroke-width="1"/>
<path d="M704,133.5 L720,131.1 L719.6,151.7 L704,158.9 Z" fill="#505050" stroke="#222" stroke-width="1"/>
<path d="M694.5,143 V147 M713,142 V146.5 M711.5,146.5 H712.5" stroke="#e8e8e8" stroke-width="1.2"/>
<path d="M682,159.5 L688,157 M719,157.5 L728,157.5 M724,155 V160.5" stroke="#222" stroke-width="1"/>
</svg>
<div class="a t" style="left:748.0px;top:96.4px;color:#fff;font-size:7.2px;font-weight:bold;">CUT2</div>
<div class="a t" style="left:772.0px;top:96.4px;color:#fde3cf;font-size:7.2px;">[Cut of member]</div>
<div class="a t" style="left:1028.0px;top:96.4px;color:#fff;font-size:7.2px;font-weight:bold;">Editor</div>
<div class="a t" style="left:1052.5px;top:96.4px;color:#fff;font-size:7.2px;font-weight:bold;">Copy</div>
<div class="a t" style="left:1074.5px;top:96.4px;color:#fff;font-size:7.2px;font-weight:bold;">Delete</div>
<svg class="i" style="left:750px;top:115px" width="12" height="90" viewBox="750 115 12 90"><path d="M753,119 L758.8,119 L755.9,123.8 Z M752.8,193 L758.5,193 L755.6,197.8 Z" fill="#e2702c"/></svg>
<div class="a t" style="left:768.5px;top:118.3px;color:#d06a2a;font-size:8.3px;font-weight:bold;">Cut of member</div>
<div class="a t" style="left:768.5px;top:191.8px;color:#d06a2a;font-size:8.3px;font-weight:bold;">Welds</div>
<div class="a t" style="left:768.5px;top:133.8px;color:#222;font-size:7.3px;">Member</div>
<div class="a t" style="left:768.5px;top:147.8px;color:#222;font-size:7.3px;">Cut by</div>
<div class="a t" style="left:768.5px;top:162.3px;color:#222;font-size:7.3px;">Cutting method</div>
<div class="a t" style="left:768.5px;top:176.3px;color:#222;font-size:7.3px;">Offset [mm]</div>
<div class="a" style="left:820px;top:130.5px;width:261px;height:12.5px;background:#e4e4e4"></div>
<div class="a" style="left:820px;top:144.5px;width:217.5px;height:13.3px;background:#e4e4e4"></div>
<div class="a" style="left:820px;top:159.5px;width:276px;height:12px;background:#e4e4e4"></div>
<div class="a" style="left:820px;top:173px;width:276px;height:12.8px;background:#f0f0f0"></div>
<div class="a t" style="left:823.0px;top:133.8px;color:#222;font-size:7.3px;">M2</div>
<div class="a t" style="left:823.0px;top:147.8px;color:#222;font-size:7.3px;">SP5</div>
<div class="a t" style="left:823.0px;top:162.3px;color:#222;font-size:7.3px;">Surface</div>
<div class="a t" style="left:823.0px;top:176.3px;color:#222;font-size:7.3px;">0</div>
<svg class="i" style="left:1020px;top:128px" width="82" height="106" viewBox="1020 128 82 106">
<path d="M1074,135.5 H1078.8 L1076.4,138.5 Z M1031,149.5 H1035.8 L1033.4,152.5 Z M1088.5,164 H1093.3 L1090.9,167 Z" fill="#111"/>
<rect x="1083" y="130.3" width="12.7" height="12.5" fill="#9a9a9a"/><path d="M1087,133 V140.5 L1088.8,138.8 L1090.3,141.8 L1091.5,141.2 L1090,138.3 L1092.5,138 Z" fill="#fff"/>
<rect x="1083" y="144.6" width="12.7" height="13.4" fill="#9a9a9a"/><path d="M1087,147.5 V155 L1088.8,153.3 L1090.3,156.3 L1091.5,155.7 L1090,152.8 L1092.5,152.5 Z" fill="#fff"/>
<rect x="1042" y="148.2" width="9.5" height="1.8" fill="#333"/><rect x="1042" y="153.2" width="9.5" height="1.8" fill="#333"/><path d="M1042.5,150 L1041.2,151.6 L1042.5,153.2 M1051,150 L1052.3,151.6 L1051,153.2" fill="none" stroke="#333" stroke-width="0.7"/>
<rect x="1055.7" y="144.6" width="11.3" height="13.2" fill="#e8742c"/><path d="M1058.5,146.5 H1064 M1058.5,156 H1064 M1060,147 V155.5 H1062.5 V147" fill="#fff" stroke="#fff" stroke-width="1.2"/><rect x="1059" y="149" width="5" height="4.5" fill="#fff"/>
<path d="M1071,151 L1080.8,146 V154 L1071,158 Z" fill="#e6e6e6" stroke="#d0d0d0" stroke-width="0.5"/><path d="M1073,150 V157 M1075,149 V156 M1077,148 V155 M1079,147 V154" stroke="#cfcfcf" stroke-width="0.5"/>
</svg>
<div class="a t" style="left:768.5px;top:207.4px;color:#222;font-size:7.3px;">Flanges [mm]</div>
<div class="a t" style="left:768.5px;top:221.6px;color:#222;font-size:7.3px;">Webs [mm]</div>
<div class="a t" style="left:820.0px;top:206.2px;color:#9a9a9a;font-size:7.3px;">0.0</div>
<div class="a t" style="left:820.0px;top:220.4px;color:#9a9a9a;font-size:7.3px;">0.0</div>
<div class="a" style="left:835.3px;top:204px;width:12.8px;height:12px;background:#9a9a9a"></div>
<div class="a" style="left:835.3px;top:218px;width:12.8px;height:12.3px;background:#9a9a9a"></div>
<div class="a" style="left:850px;top:204px;width:173px;height:12px;background:#e4e4e4"></div>
<div class="a" style="left:850px;top:218px;width:173px;height:12.3px;background:#e4e4e4"></div>
<div class="a t" style="left:853.0px;top:207.1px;color:#222;font-size:7.3px;">&lt; default &gt;</div>
<div class="a t" style="left:853.0px;top:221.3px;color:#222;font-size:7.3px;">&lt; default &gt;</div>
<svg class="i" style="left:1000px;top:200px" width="102" height="34" viewBox="1000 200 102 34"><path d="M1015.5,209 H1020.3 L1017.9,212 Z M1015.5,223 H1020.3 L1017.9,226 Z" fill="#111"/><path d="M841.7,206 L840,208 H843.4 Z" fill="#fff"/><rect x="1024.9" y="204.0" width="11.8" height="12" fill="#e8742c"/>
<path d="M1030.3,206.0 V 213.3 M1026.8,213.3 H1034.8" stroke="#fff" stroke-width="1.2" fill="none"/><path d="M1026.5,213.3 L1030.3,209.0 V 213.3 Z" fill="#111"/><rect x="1026.5" y="213.8" width="8.5" height="1.4" fill="#fff"/>
<g fill="none" stroke="#bdbdbd" stroke-width="0.8"><path d="M1044.5,206.0 V 213.3 H1046.5 V 206.0 Z M1040.5,213.3 H1050.5 V 215.0 H1040.5 Z"/><path d="M1059.5,206.0 V 213.3 H1061.5 V 206.0 Z M1055.5,213.3 H1065.5 V 215.0 H1055.5 Z"/><path d="M1074.5,206.0 V 213.3 H1076.5 V 206.0 Z M1070.5,213.3 H1080.5 V 215.0 H1070.5 Z"/><path d="M1088.5,206.0 V 213.3 H1090.5 V 206.0 Z M1084.5,213.3 H1094.5 V 215.0 H1084.5 Z"/></g>
<path d="M1046.5,209.0 L1050,213.3 H1046.5 Z M1059.5,209.0 L1055.5,213.3 H1059.5 Z M1061.5,209.0 L1065.5,213.3 H1061.5 Z M1074.5,211.0 L1072,213.3 H1074.5 Z" fill="#111"/>
<path d="M1025.5,204.0 V 215.0" stroke="none"/><rect x="1024.9" y="218.0" width="11.8" height="12" fill="#e8742c"/>
<path d="M1030.3,220.0 V 227.3 M1026.8,227.3 H1034.8" stroke="#fff" stroke-width="1.2" fill="none"/><path d="M1026.5,227.3 L1030.3,223.0 V 227.3 Z" fill="#111"/><rect x="1026.5" y="227.8" width="8.5" height="1.4" fill="#fff"/>
<g fill="none" stroke="#bdbdbd" stroke-width="0.8"><path d="M1044.5,220.0 V 227.3 H1046.5 V 220.0 Z M1040.5,227.3 H1050.5 V 229.0 H1040.5 Z"/><path d="M1059.5,220.0 V 227.3 H1061.5 V 220.0 Z M1055.5,227.3 H1065.5 V 229.0 H1055.5 Z"/><path d="M1074.5,220.0 V 227.3 H1076.5 V 220.0 Z M1070.5,227.3 H1080.5 V 229.0 H1070.5 Z"/><path d="M1088.5,220.0 V 227.3 H1090.5 V 220.0 Z M1084.5,227.3 H1094.5 V 229.0 H1084.5 Z"/></g>
<path d="M1046.5,223.0 L1050,227.3 H1046.5 Z M1059.5,223.0 L1055.5,227.3 H1059.5 Z M1061.5,223.0 L1065.5,227.3 H1061.5 Z M1074.5,225.0 L1072,227.3 H1074.5 Z" fill="#111"/>
<path d="M1025.5,218.0 V 229.0" stroke="none"/></svg>
<svg class="i" style="left:835px;top:204px" width="14" height="27" viewBox="835 204 14 27"><path d="M840,208 L841.7,206 L843.4,208 Z M840,212.5 L841.7,214.5 L843.4,212.5 Z M840,222 L841.7,220 L843.4,222 Z M840,226.5 L841.7,228.5 L843.4,226.5 Z" fill="#e8e8e8"/></svg>
<svg class="i" style="left:660px;top:175px" width="80" height="365" viewBox="660 175 80 365">
<path d="M667,185.8 L670.2,182.6 L670.2,185.8 Z" fill="#333"/>
<rect x="680.7" y="192.8" width="5.5" height="5.5" fill="#ececec"/><path d="M681.5,195.5 L683.3,198.2 L687.5,192.2" fill="none" stroke="#f29a44" stroke-width="1.3"/>
<rect x="680.7" y="205.7" width="5.5" height="5.5" fill="#ececec"/><path d="M681.5,208.3 L683.3,211.0 L687.5,205.0" fill="none" stroke="#f29a44" stroke-width="1.3"/>
<rect x="680.7" y="218.6" width="5.5" height="5.5" fill="#ececec"/><path d="M681.5,221.2 L683.3,223.9 L687.5,217.9" fill="none" stroke="#f29a44" stroke-width="1.3"/>
<path d="M667,237.2 L670.2,234.0 L670.2,237.2 Z" fill="#333"/>
<rect x="680.7" y="244.2" width="5.5" height="5.5" fill="#ececec"/><path d="M681.5,246.9 L683.3,249.6 L687.5,243.6" fill="none" stroke="#f29a44" stroke-width="1.3"/>
<rect x="680.7" y="257.1" width="5.5" height="5.5" fill="#ececec"/><path d="M681.5,259.7 L683.3,262.4 L687.5,256.4" fill="none" stroke="#f29a44" stroke-width="1.3"/>
<path d="M667,275.8 L670.2,272.6 L670.2,275.8 Z" fill="#333"/>
<rect x="680.7" y="282.8" width="5.5" height="5.5" fill="#ececec"/><path d="M681.5,285.4 L683.3,288.1 L687.5,282.1" fill="none" stroke="#f29a44" stroke-width="1.3"/>
<rect x="680.7" y="295.6" width="5.5" height="5.5" fill="#ececec"/><path d="M681.5,298.2 L683.3,300.9 L687.5,294.9" fill="none" stroke="#f29a44" stroke-width="1.3"/>
<rect x="680.7" y="308.5" width="5.5" height="5.5" fill="#ececec"/><path d="M681.5,311.1 L683.3,313.8 L687.5,307.8" fill="none" stroke="#f29a44" stroke-width="1.3"/>
<rect x="680.7" y="321.3" width="5.5" height="5.5" fill="#ececec"/><path d="M681.5,323.9 L683.3,326.6 L687.5,320.6" fill="none" stroke="#f29a44" stroke-width="1.3"/>
<rect x="680.7" y="334.2" width="5.5" height="5.5" fill="#ececec"/><path d="M681.5,336.8 L683.3,339.5 L687.5,333.5" fill="none" stroke="#f29a44" stroke-width="1.3"/>
<rect x="680.7" y="347.1" width="5.5" height="5.5" fill="#ececec"/><path d="M681.5,349.7 L683.3,352.4 L687.5,346.4" fill="none" stroke="#f29a44" stroke-width="1.3"/>
<rect x="680.7" y="359.9" width="5.5" height="5.5" fill="#ececec"/><path d="M681.5,362.5 L683.3,365.2 L687.5,359.2" fill="none" stroke="#f29a44" stroke-width="1.3"/>
<rect x="680.7" y="372.8" width="5.5" height="5.5" fill="#ececec"/><path d="M681.5,375.4 L683.3,378.1 L687.5,372.1" fill="none" stroke="#f29a44" stroke-width="1.3"/>
<rect x="680.7" y="385.6" width="5.5" height="5.5" fill="#ececec"/><path d="M681.5,388.2 L683.3,390.9 L687.5,384.9" fill="none" stroke="#f29a44" stroke-width="1.3"/>
<rect x="680.7" y="398.4" width="5.5" height="5.5" fill="#ececec"/><path d="M681.5,401.1 L683.3,403.8 L687.5,397.8" fill="none" stroke="#f29a44" stroke-width="1.3"/>
<rect x="680.7" y="411.3" width="5.5" height="5.5" fill="#ececec"/><path d="M681.5,413.9 L683.3,416.6 L687.5,410.6" fill="none" stroke="#f29a44" stroke-width="1.3"/>
<rect x="680.7" y="424.2" width="5.5" height="5.5" fill="#ececec"/><path d="M681.5,426.8 L683.3,429.5 L687.5,423.5" fill="none" stroke="#f29a44" stroke-width="1.3"/>
<rect x="680.7" y="437.0" width="5.5" height="5.5" fill="#ececec"/><path d="M681.5,439.6 L683.3,442.3 L687.5,436.3" fill="none" stroke="#f29a44" stroke-width="1.3"/>
<rect x="680.7" y="449.8" width="5.5" height="5.5" fill="#ececec"/><path d="M681.5,452.4 L683.3,455.1 L687.5,449.1" fill="none" stroke="#f29a44" stroke-width="1.3"/>
<rect x="680.7" y="462.7" width="5.5" height="5.5" fill="#ececec"/><path d="M681.5,465.3 L683.3,468.0 L687.5,462.0" fill="none" stroke="#f29a44" stroke-width="1.3"/>
<rect x="680.7" y="475.6" width="5.5" height="5.5" fill="#ececec"/><path d="M681.5,478.2 L683.3,480.9 L687.5,474.9" fill="none" stroke="#f29a44" stroke-width="1.3"/>
<rect x="680.7" y="488.4" width="5.5" height="5.5" fill="#ececec"/><path d="M681.5,491.0 L683.3,493.7 L687.5,487.7" fill="none" stroke="#f29a44" stroke-width="1.3"/>
<rect x="680.7" y="501.2" width="5.5" height="5.5" fill="#ececec"/><path d="M681.5,503.9 L683.3,506.6 L687.5,500.6" fill="none" stroke="#f29a44" stroke-width="1.3"/>
<rect x="680.7" y="514.1" width="5.5" height="5.5" fill="#ececec"/><path d="M681.5,516.7 L683.3,519.4 L687.5,513.4" fill="none" stroke="#f29a44" stroke-width="1.3"/>
<path d="M674,524.8 H721.3 L730,530.8 L721.3,536.8 H674 Z" fill="#f47a22"/>
<rect x="680.5" y="527.8" width="5.8" height="5.8" fill="none" stroke="#fde0c8" stroke-width="1"/><path d="M681.8,530.2 L683.3,532.0 L686,527.5" fill="none" stroke="#fde0c8" stroke-width="1.1"/>
</svg>
<div class="a t" style="left:680.4px;top:180.6px;color:#333;font-size:7.6px;font-weight:bold;">Members</div>
<div class="a t" style="left:696.0px;top:193.5px;color:#333;font-size:7.3px;text-decoration:underline;">M1</div>
<div class="a t" style="left:696.0px;top:206.3px;color:#333;font-size:7.3px;">M2</div>
<div class="a t" style="left:696.0px;top:219.2px;color:#333;font-size:7.3px;">M3</div>
<div class="a t" style="left:680.4px;top:232.0px;color:#333;font-size:7.6px;font-weight:bold;">Load effects</div>
<div class="a t" style="left:696.0px;top:244.9px;color:#333;font-size:7.3px;">LE1</div>
<div class="a t" style="left:696.0px;top:257.7px;color:#333;font-size:7.3px;">LE2</div>
<div class="a t" style="left:680.4px;top:270.6px;color:#333;font-size:7.6px;font-weight:bold;">Operations</div>
<div class="a t" style="left:696.0px;top:283.4px;color:#333;font-size:7.3px;">SP1</div>
<div class="a t" style="left:696.0px;top:296.2px;color:#333;font-size:7.3px;">SP2</div>
<div class="a t" style="left:696.0px;top:309.1px;color:#333;font-size:7.3px;">Weld1</div>
<div class="a t" style="left:696.0px;top:321.9px;color:#333;font-size:7.3px;">STIFF1</div>
<div class="a t" style="left:696.0px;top:334.8px;color:#333;font-size:7.3px;">PCUT1</div>
<div class="a t" style="left:696.0px;top:347.7px;color:#333;font-size:7.3px;">PCUT2</div>
<div class="a t" style="left:696.0px;top:360.5px;color:#333;font-size:7.3px;">Weld2</div>
<div class="a t" style="left:696.0px;top:373.4px;color:#333;font-size:7.3px;">CPL1</div>
<div class="a t" style="left:696.0px;top:386.2px;color:#333;font-size:7.3px;">CPL2</div>
<div class="a t" style="left:696.0px;top:399.1px;color:#333;font-size:7.3px;">PCUT3</div>
<div class="a t" style="left:696.0px;top:411.9px;color:#333;font-size:7.3px;">PCUT4</div>
<div class="a t" style="left:696.0px;top:424.8px;color:#333;font-size:7.3px;">SP3</div>
<div class="a t" style="left:696.0px;top:437.6px;color:#333;font-size:7.3px;">PCUT5</div>
<div class="a t" style="left:696.0px;top:450.4px;color:#333;font-size:7.3px;">SP4</div>
<div class="a t" style="left:696.0px;top:463.3px;color:#333;font-size:7.3px;">PCUT6</div>
<div class="a t" style="left:696.0px;top:476.2px;color:#333;font-size:7.3px;">SP5</div>
<div class="a t" style="left:696.0px;top:489.0px;color:#333;font-size:7.3px;">SP6</div>
<div class="a t" style="left:696.0px;top:501.9px;color:#333;font-size:7.3px;">GRD1</div>
<div class="a t" style="left:696.0px;top:514.7px;color:#333;font-size:7.3px;">CUT1</div>
<div class="a t" style="left:696.0px;top:527.5px;color:#fde6d4;font-size:7.3px;">CUT2</div>
<div class="a" style="left:1068px;top:607.5px;width:16px;height:4.5px;background:#e8742c;border-radius:1px"></div><div class="a" style="left:1085px;top:607px;color:#333;font-size:4px;line-height:5px">StatiCa</div>
<div class="a t" style="left:30.4px;top:619.8px;color:#8c8c8c;font-size:7.3px;">Design code:</div>
<div class="a t" style="left:75.0px;top:619.8px;color:#fff;font-size:6.75px;font-weight:bold;">EN</div>
<div class="a t" style="left:95.7px;top:619.8px;color:#8c8c8c;font-size:7.3px;">Analysis:</div>
<div class="a t" style="left:125.4px;top:619.8px;color:#fff;font-size:6.75px;font-weight:bold;">Stress, strain</div>
<div class="a t" style="left:178.6px;top:619.8px;color:#8c8c8c;font-size:7.3px;">Load effects:</div>
<div class="a t" style="left:223.6px;top:619.8px;color:#fff;font-size:6.75px;font-weight:bold;">Equilibrium not required</div>
<div class="a t" style="left:314.3px;top:619.8px;color:#8c8c8c;font-size:7.3px;">Units:</div>
<div class="a t" style="left:337.5px;top:619.8px;color:#fff;font-size:6.75px;font-weight:bold;">mm</div>
<div class="a t" style="left:1030.0px;top:619.8px;color:#e07a30;font-size:7.3px;">www.<span style="color:#f0f0f0">ideastatica</span>.com</div>
</body></html>
